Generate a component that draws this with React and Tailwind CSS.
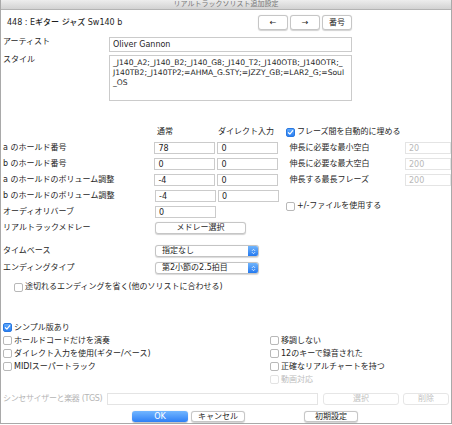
import React from 'react'
import clsx from 'clsx'

function Check({ checked, disabled }) {
  return (
    <span
      className={clsx(
        'w-[9px] h-[9px] rounded-[2px] border flex items-center justify-center shrink-0',
        checked
          ? 'bg-gradient-to-b from-[#5ea8fb] to-[#2a80f3] border-[#2a78e0]'
          : disabled
          ? 'bg-white border-[#e3e3e3]'
          : 'bg-white border-[#b8b8b8]'
      )}
    >
      {checked && (
        <svg viewBox="0 0 10 10" className="w-[7px] h-[7px]">
          <path d="M2 5.3 L4.1 7.4 L8.2 2.4" stroke="white" strokeWidth="1.7" fill="none" strokeLinecap="round" strokeLinejoin="round" />
        </svg>
      )}
    </span>
  )
}

function CheckRow({ label, checked, disabled, className }) {
  return (
    <div className={clsx('flex items-center gap-[2px]', className)}>
      <Check checked={checked} disabled={disabled} />
      <span className={clsx('leading-none', disabled && 'text-[#bdbdbd]')}>{label}</span>
    </div>
  )
}

function Field({ value, className, dim }) {
  return (
    <input
      readOnly
      value={value}
      className={clsx(
        'h-[12px] px-[3px] text-[8px] leading-none border bg-white outline-none',
        dim ? 'border-[#e4e4e4] text-[#b8b8b8]' : 'border-[#cbcbcb] text-[#1e1e1e]',
        className
      )}
    />
  )
}

function Btn({ children, className, dim }) {
  return (
    <button
      className={clsx(
        'rounded-[3px] border bg-white flex items-center justify-center leading-none text-[8px]',
        dim
          ? 'border-[#e6e6e6] text-[#c2c2c2]'
          : 'border-[#c6c6c6] shadow-[0_0.5px_1px_rgba(0,0,0,0.18)] text-[#1e1e1e]',
        className
      )}
    >
      {children}
    </button>
  )
}

function Select({ value }) {
  return (
    <div className="h-[12px] w-[104px] flex rounded-[3px] border border-[#c4c4c4] bg-white shadow-[0_0.5px_1px_rgba(0,0,0,0.15)] overflow-hidden">
      <span className="flex-1 pl-[6px] flex items-center leading-none">{value}</span>
      <span className="w-[10px] bg-gradient-to-b from-[#70b4fb] to-[#2279f0] flex items-center justify-center">
        <svg viewBox="0 0 8 10" className="w-[5px] h-[7px]">
          <path d="M1.5 4 L4 1.5 L6.5 4 M1.5 6 L4 8.5 L6.5 6" stroke="white" strokeWidth="1.2" fill="none" />
        </svg>
      </span>
    </div>
  )
}

const holds = [
  { label: 'a のホールド番号', a: '78', b: '0', right: '伸長に必要な最小空白', rv: '20' },
  { label: 'b のホールド番号', a: '0', b: '0', right: '伸長に必要な最大空白', rv: '200' },
  { label: 'a のホールドのボリューム調整', a: '-4', b: '0', right: '伸長する最長フレーズ', rv: '200' },
  { label: 'b のホールドのボリューム調整', a: '-4', b: '0' },
]

export default function App() {
  return (
    <div className="w-[452px] h-[425px] bg-white font-['DejaVu_Sans','Noto_Sans_CJK_JP',sans-serif] text-[8px] text-[#1e1e1e]">
      <div className="h-[424px] border-x border-b border-[#a9a9a9] flex flex-col">
        <div className="h-[10px] shrink-0 bg-gradient-to-b from-[#ededed] to-[#d2d2d2] border-b border-[#b3b3b3] flex items-center justify-center text-[7px] text-[#777] leading-none">
          リアルトラックソリスト追加設定
        </div>

        <div className="mt-[5px] h-[15px] flex items-center">
          <div className="pl-[6px] w-[257px] font-medium leading-none">448 : Eギター ジャズ Sw140 b</div>
          <div className="flex gap-[2px]">
            <Btn className="w-[30px] h-[15px]">←</Btn>
            <Btn className="w-[30px] h-[15px]">→</Btn>
            <Btn className="w-[30px] h-[15px]">番号</Btn>
          </div>
        </div>

        <div className="mt-[7px] flex">
          <div className="w-[108px] pl-[2px] leading-none pt-[1px]">アーティスト</div>
          <Field value="Oliver Gannon" className="w-[243px] !h-[15px]" />
        </div>

        <div className="mt-[3px] flex">
          <div className="w-[108px] pl-[2px] leading-none pt-[1px]">スタイル</div>
          <div className="w-[243px] h-[46px] border border-[#cbcbcb] pt-[2px] px-[3px] text-[7.6px] leading-[10px] whitespace-nowrap overflow-hidden">
            <div>_J140_A2;_J140_B2;_J140_G8;_J140_T2;_J140OTB;_J140OTR;_</div>
            <div>J140TB2;_J140TP2;=AHMA_G.STY;=JZZY_GB;=LAR2_G;=Soul</div>
            <div>_OS</div>
          </div>
        </div>

        <div className="mt-[26px] h-[10px] flex items-center">
          <div className="w-[154px]" />
          <div className="w-[61px] pl-[2px] leading-none">通常</div>
          <div className="ml-[2px] w-[61px] leading-none">ダイレクト入力</div>
          <CheckRow className="ml-[7px]" label="フレーズ間を自動的に埋める" checked />
        </div>

        <div className="mt-[5px] flex flex-col gap-[4px]">
          {holds.map((h) => (
            <div key={h.label} className="h-[12px] flex items-center">
              <div className="w-[154px] pl-[2px] leading-none">{h.label}</div>
              <Field value={h.a} className="w-[61px]" />
              <Field value={h.b} className="ml-[2px] w-[61px]" />
              {h.right && (
                <>
                  <div className="ml-[9px] w-[118px] pl-[2px] leading-none">{h.right}</div>
                  <Field value={h.rv} className="w-[46px]" dim />
                </>
              )}
            </div>
          ))}
          <div className="h-[12px] flex items-center">
            <div className="w-[154px] pl-[2px] leading-none">オーディオリバーブ</div>
            <Field value="0" className="w-[61px]" />
            <CheckRow className="ml-[70px] -mt-[12px]" label="+/-ファイルを使用する" />
          </div>
          <div className="h-[12px] flex items-center">
            <div className="w-[154px] pl-[2px] leading-none">リアルトラックメドレー</div>
            <Btn className="w-[91px] h-[12px]">メドレー選択</Btn>
          </div>
        </div>

        <div className="mt-[11px] h-[12px] flex items-center">
          <div className="w-[154px] pl-[2px] leading-none">タイムベース</div>
          <Select value="指定なし" />
        </div>
        <div className="mt-[5px] h-[12px] flex items-center">
          <div className="w-[154px] pl-[2px] leading-none">エンディングタイプ</div>
          <Select value="第2小節の2.5拍目" />
        </div>

        <div className="mt-[8px] h-[10px] flex items-center pl-[13px]">
          <CheckRow label="途切れるエンディングを省く(他のソリストに合わせる)" />
        </div>

        <div className="mt-[29px] flex">
          <div className="w-[269px] pl-[2px] flex flex-col">
            <CheckRow className="h-[13px]" label="シンプル版あり" checked />
            <CheckRow className="h-[13px]" label="ホールドコードだけを演奏" />
            <CheckRow className="h-[13px]" label="ダイレクト入力を使用(ギター/ベース)" />
            <CheckRow className="h-[13px]" label="MIDIスーパートラック" />
          </div>
          <div className="flex flex-col">
            <div className="h-[13px]" />
            <CheckRow className="h-[13px]" label="移調しない" />
            <CheckRow className="h-[13px]" label="12のキーで録音された" />
            <CheckRow className="h-[13px]" label="正確なリアルチャートを持つ" />
            <CheckRow className="h-[13px]" label="動画対応" disabled />
          </div>
        </div>

        <div className="mt-[7px] h-[12px] flex items-center">
          <div className="w-[106px] pl-[2px] leading-none text-[#b5b5b5] whitespace-nowrap tracking-[-0.35px]">シンセサイザーと楽器 (TGS)</div>
          <Field value="" className="w-[211px]" dim />
          <Btn className="ml-[5px] w-[76px] h-[12px]" dim>選択</Btn>
          <Btn className="ml-[4px] w-[46px] h-[12px]" dim>削除</Btn>
        </div>

        <div className="mt-[6px] h-[11px] flex items-center pl-[131px]">
          <button className="w-[56px] h-[11px] rounded-[3px] bg-gradient-to-b from-[#72b6ff] to-[#2d7ff5] text-white leading-none text-[8px] shadow-[0_0.5px_1px_rgba(0,0,0,0.25)]">
            OK
          </button>
          <Btn className="ml-[3px] w-[54px] h-[11px]">キャンセル</Btn>
          <Btn className="ml-[59px] w-[54px] h-[11px]">初期設定</Btn>
        </div>
      </div>
    </div>
  )
}
